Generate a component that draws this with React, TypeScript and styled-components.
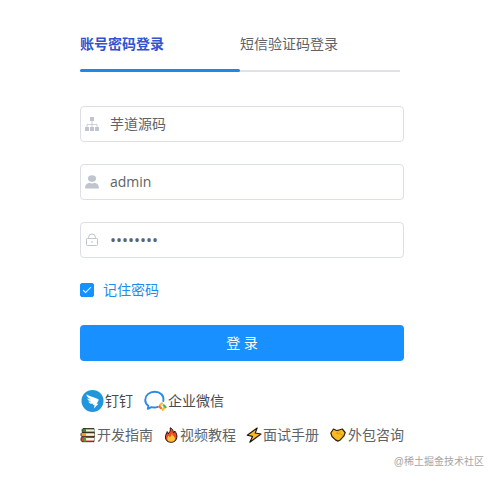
import React, { useState } from "react";
import styled, { createGlobalStyle } from "styled-components";

const GlobalStyle = createGlobalStyle`
  *, *::before, *::after { box-sizing: border-box; }
  body {
    margin: 0;
    background: #fff;
    color: #606266;
    font-family: "Open Sans", "Noto Sans CJK SC", sans-serif;
    font-size: 14px;
    line-height: 20px;
  }
  button, input { font: inherit; }
`;

const Page = styled.main`
  position: relative;
  padding: 24px 93px 24px 80px;
`;

const Tabs = styled.div`
  display: grid;
  grid-template-columns: 1fr 1fr;
  margin: 0 4px 34px 0;
`;

const Tab = styled.button<{ $active: boolean }>`
  position: relative;
  height: 48px;
  padding: 0 0 6px;
  border: 0;
  border-bottom: 2px solid #dfe1e6;
  background: none;
  color: ${(p) => (p.$active ? "#3352cf" : "#606266")};
  font-weight: ${(p) => (p.$active ? 700 : 400)};
  text-align: left;
  cursor: pointer;

  &::after {
    content: "";
    display: ${(p) => (p.$active ? "block" : "none")};
    position: absolute;
    right: 0;
    bottom: -2px;
    left: 0;
    height: 3px;
    border-radius: 2px;
    background: #1f87e8;
  }
`;

const Form = styled.form`
  display: flex;
  flex-direction: column;
  gap: 22px;
`;

const Field = styled.label`
  display: flex;
  align-items: center;
  height: 36px;
  padding-left: 4px;
  gap: 11px;
  border: 1px solid #dcdfe6;
  border-radius: 4px;
  color: #c0c4cc;
`;

const FieldInput = styled.input`
  flex: 1;
  min-width: 0;
  padding: 0;
  border: 0;
  outline: 0;
  background: none;
  color: #606266;

  &[type="password"] { font-size: 16px; }
`;

const Icon = styled.svg<{ $size: number }>`
  flex: none;
  display: block;
  width: ${(p) => p.$size}px;
  height: ${(p) => p.$size}px;
`;

const Remember = styled.label`
  display: flex;
  align-items: center;
  gap: 9px;
  align-self: flex-start;
  color: #1f8ceb;
  cursor: pointer;
`;

const Check = styled.input`
  appearance: none;
  width: 14px;
  height: 14px;
  margin: 0;
  border: 1px solid #1890ff;
  border-radius: 2px;
  display: grid;
  place-content: center;
  &:checked { background: #1890ff; }
  &:checked::before {
    content: "";
    width: 8px;
    height: 4px;
    margin-top: -2px;
    border: solid #fff;
    border-width: 0 0 1px 1px;
    transform: rotate(-45deg);
  }
`;

const Submit = styled.button`
  height: 36px;
  margin-top: 3px;
  border: 0;
  border-radius: 4px;
  background: #1890ff;
  color: #fff;
  cursor: pointer;
`;

const Social = styled.div`
  display: flex;
  gap: 10px;
  margin-top: 28px;
`;

const SocialButton = styled.button`
  display: flex;
  align-items: center;
  height: 24px;
  padding: 0;
  border: 0;
  background: none;
  color: #484b50;
  cursor: pointer;
`;

const Links = styled.nav`
  display: flex;
  justify-content: space-between;
  margin-top: 12px;
`;

const HelpLink = styled.a`
  display: flex;
  align-items: center;
  gap: 1px;
  color: #606266;
  text-decoration: none;
  white-space: nowrap;
`;

const Watermark = styled.small`
  position: absolute;
  right: 13px;
  bottom: 0;
  color: #a6a6a6;
  font-family: "Liberation Sans", "Noto Sans CJK SC", sans-serif;
  font-size: 10px;
  line-height: 14px;
`;

const TenantIcon = () => (
  <Icon $size={14} viewBox="0 0 14 14" fill="currentColor" aria-hidden="true">
    <path d="M5 0h4v4H5zM0 10h4v4H0zM5 10h4v4H5zM10 10h4v4h-4z" />
    <path d="M7 4v6M2 10V7.500h10V10" fill="none" stroke="currentColor" strokeWidth=".8" />
  </Icon>
);

const UserIcon = () => (
  <Icon $size={14} viewBox="0 0 14 14" fill="currentColor" aria-hidden="true">
    <ellipse cx="7" cy="3.6" rx="4" ry="3.3" />
    <path d="M0 13.6c0-3.500 1.600-5.400 4.300-5.900 1.600.9 3.800.9 5.400 0 2.700.5 4.300 2.400 4.300 5.900z" />
  </Icon>
);

const LockIcon = () => (
  <Icon $size={14} viewBox="0 0 14 14" fill="none" stroke="currentColor" aria-hidden="true">
    <rect x="1.500" y="5.500" width="11" height="7" rx="1" />
    <path d="M3.500 5.500V4.600a3.500 3.600 0 0 1 7 0v.9M7 8v2" />
  </Icon>
);

const DingIcon = () => (
  <Icon $size={25} viewBox="0 0 25 25" aria-hidden="true">
    <circle cx="12.5" cy="11.900" r="11" fill="#2196db" />
    <path
      d="M6.400 5.200c3.400 2.100 7.400 3.100 11.500 4.700.9.4.9 1 .5 1.800l-1.700 3h1.800l-4.700 4.900.8-3.500h-1.900l.5-1.500c-2.600.6-4-.2-4.700-2l2.900.1c-2.400-.6-3.700-1.500-4.200-3.100l3.900.8C8.300 9.100 6.600 7.800 6.400 5.200z"
      fill="#fff"
    />
  </Icon>
);

const WeComIcon = () => (
  <Icon $size={25} viewBox="0 0 25 25" aria-hidden="true">
    <path
      d="M20.300 12C21.300 6.300 17.200 2.800 11.800 2.800 6.300 2.800 2.200 6.300 2.200 10.900c0 2.600 1.200 4.500 3.200 6l-.6 2.900 3.600-1.700c2.200.6 4.400.5 6.400-.2"
      fill="none"
      stroke="#2a8ae5"
      strokeWidth="1.900"
      strokeLinecap="round"
      strokeLinejoin="round"
    />
    <g fill="none" strokeWidth="2.200" strokeLinecap="round">
      <path d="M18.900 14.400l-1.900 1.900" stroke="#f6bd27" />
      <path d="M16.300 17.600l1.700 1.500" stroke="#f26b3a" />
      <path d="M19.600 20.800l1.300-1.600" stroke="#f6bd27" />
      <path d="M22.600 18.300l-1.900-2" stroke="#45b649" />
    </g>
  </Icon>
);

const BooksIcon = () => (
  <Icon $size={16} viewBox="0 0 16 16" stroke="#242018" strokeLinejoin="round" strokeWidth=".8" aria-hidden="true">
    <path d="M3 1.500h11v4H3c-1.300-.7-1.300-3.300 0-4z" fill="#2e8b2a" />
    <path d="M6 2.500h8v2H6z" fill="#f1f1dc" stroke="none" />
    <path d="M2 5.500h12.500v4.300H2c-1.500-.8-1.500-3.500 0-4.300z" fill="#f29a22" />
    <path d="M6 6.700h8.500v2H6z" fill="#f7f4e8" stroke="none" />
    <path d="M2 9.800h12v4.900H2c-1.500-.8-1.500-4.100 0-4.900z" fill="#e0452c" />
    <path d="M6 11h8v2.500H6z" fill="#f7f4e8" stroke="none" />
    <path d="M5 10v4.500" stroke="#43a93c" strokeWidth="2.200" />
  </Icon>
);

const FireIcon = () => (
  <Icon $size={16} viewBox="0 0 16 16" strokeLinejoin="round" aria-hidden="true">
    <path
      d="M7.200.8c3.300 1.500 3 3.800 3.400 5.200.8-.4 1.100-1.200 1.100-2 1.700 2 2.500 4.300 2.100 6.500-.5 3-2.600 4.800-5.700 4.800-3.400 0-5.700-2-5.700-5.200 0-2.500 1.400-3.800 1.800-5.500.8.6 1 1.400 1 2.200C7 5.300 7.700 3.300 7.200.8z"
      fill="#f04a23"
      stroke="#24120d"
    />
    <path d="M8.600 6c.2 2.400 3.400 3.200 3.400 5.800 0 1.900-1.500 2.900-3.800 2.900s-3.900-1-3.900-2.900c0-1.400.8-2.200 1.200-3.400.8.5 1.200 1.200 1.300 2C8 9.300 8.700 7.800 8.600 6z" fill="#ffc43b" />
  </Icon>
);

const BoltIcon = () => (
  <Icon $size={16} viewBox="0 0 16 16" aria-hidden="true">
    <path d="M11.200 1L1.200 8.200l5.300 1.200L3.800 15.200 15 7l-5.800-1z" fill="#fdb928" stroke="#1c1710" strokeWidth="1.100" strokeLinejoin="round" />
  </Icon>
);

const HandshakeIcon = () => (
  <Icon $size={18} viewBox="-1 -1 18 18" strokeLinejoin="round" strokeLinecap="round" aria-hidden="true">
    <path d="M3.500 2l3 1.500 2-.3L12.200 2l3 3.500-1.400 3.700-4 4.100-2 .8-2.300-1.200L2 9.500.8 6z" fill="#fbb924" stroke="#302006" strokeWidth="1.200" />
    <path d="M8.500 4L6.500 6.400c1.100.6 2 .3 2.700-.5l3.200 2.600" fill="none" stroke="#cf8312" strokeWidth=".7" />
  </Icon>
);

const helpLinks = [
  { label: "开发指南", icon: <BooksIcon /> },
  { label: "视频教程", icon: <FireIcon /> },
  { label: "面试手册", icon: <BoltIcon /> },
  { label: "外包咨询", icon: <HandshakeIcon /> },
];

export default function App() {
  const [tab, setTab] = useState(0);
  return (
    <Page>
      <GlobalStyle />
      <Tabs role="tablist">
        {["账号密码登录", "短信验证码登录"].map((label, i) => (
          <Tab key={label} type="button" role="tab" aria-selected={tab === i} $active={tab === i} onClick={() => setTab(i)}>
            {label}
          </Tab>
        ))}
      </Tabs>
      <Form onSubmit={(e) => e.preventDefault()}>
        <Field>
          <TenantIcon />
          <FieldInput aria-label="租户" defaultValue="芋道源码" />
        </Field>
        <Field>
          <UserIcon />
          <FieldInput aria-label="账号" defaultValue="admin" />
        </Field>
        <Field>
          <LockIcon />
          <FieldInput aria-label="密码" type="password" defaultValue="admin123" />
        </Field>
        <Remember>
          <Check type="checkbox" defaultChecked />
          记住密码
        </Remember>
        <Submit type="submit">登 录</Submit>
      </Form>
      <Social>
        <SocialButton type="button"><DingIcon />钉钉</SocialButton>
        <SocialButton type="button"><WeComIcon />企业微信</SocialButton>
      </Social>
      <Links>
        {helpLinks.map(({ label, icon }) => (
          <HelpLink key={label} href="#">{icon}{label}</HelpLink>
        ))}
      </Links>
      <Watermark>@稀土掘金技术社区</Watermark>
    </Page>
  );
}
